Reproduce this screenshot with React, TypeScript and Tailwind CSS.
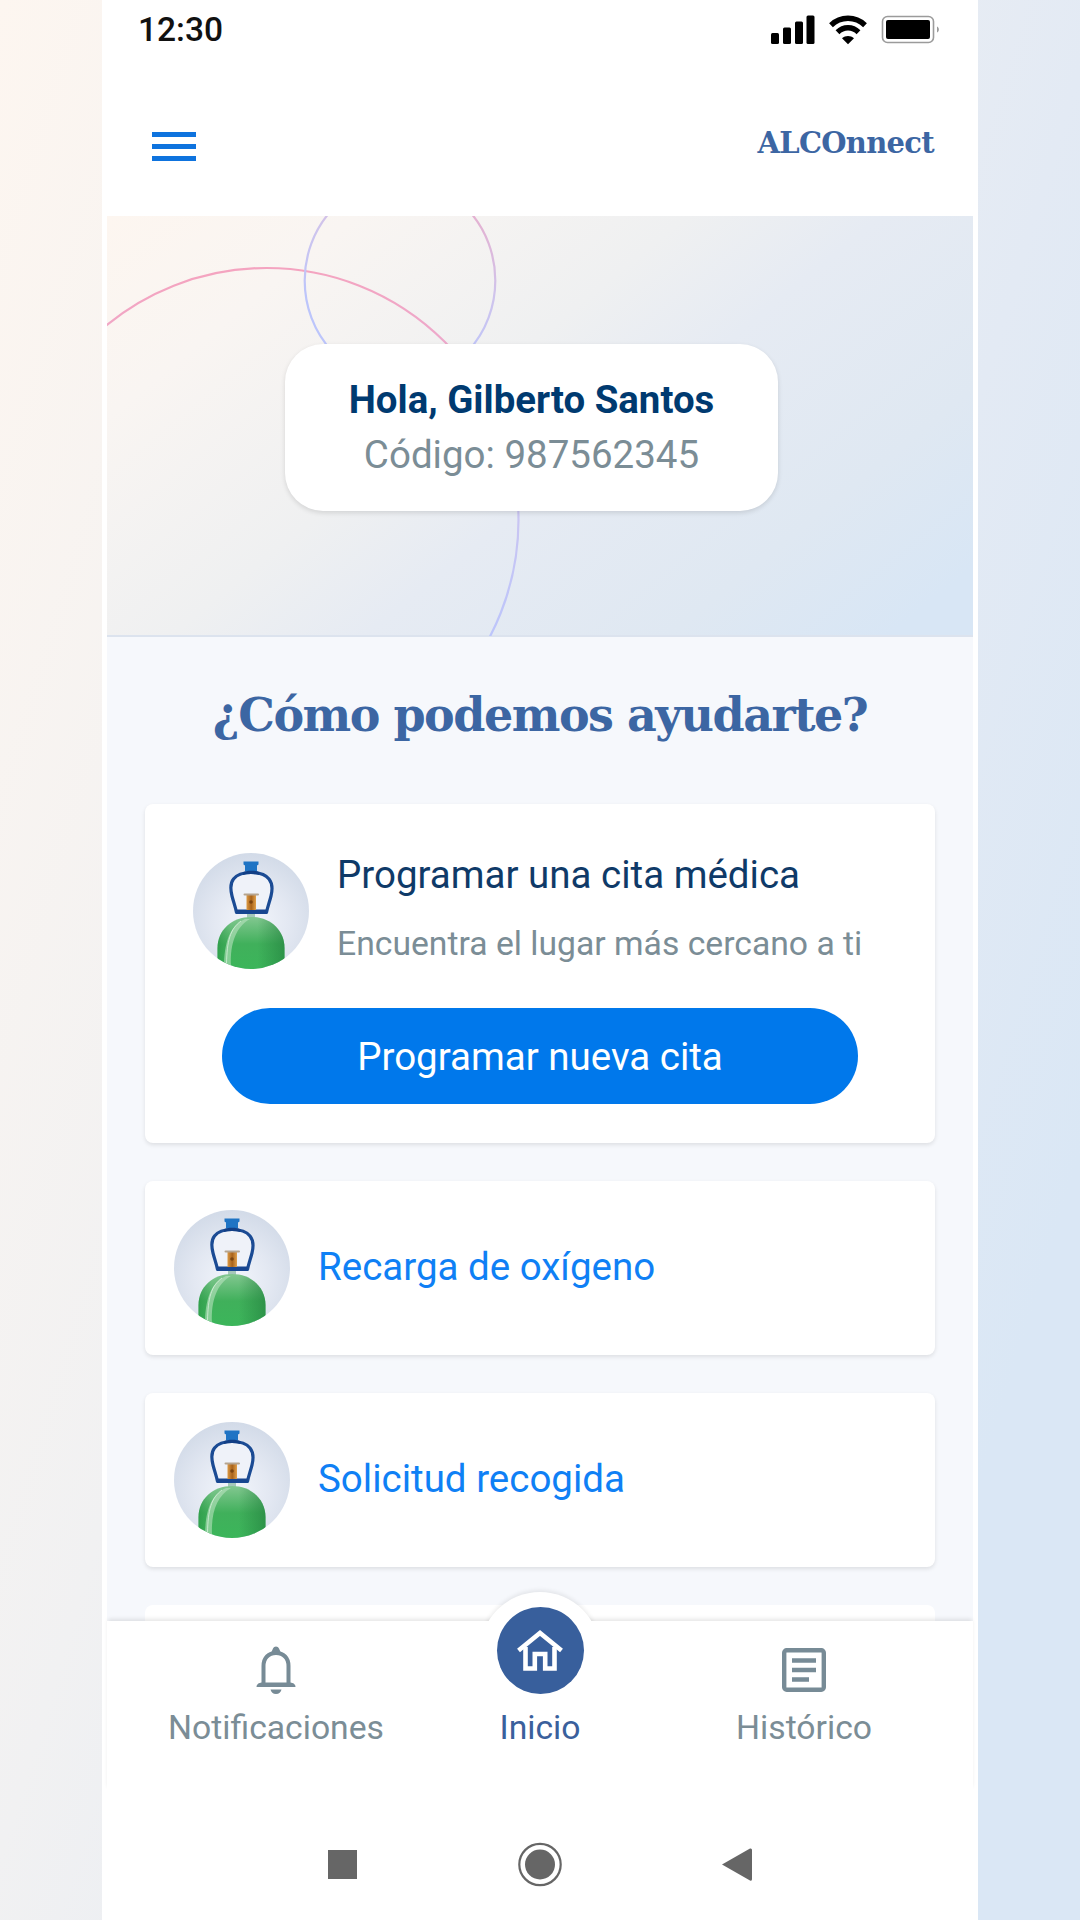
import { clsx } from 'clsx'

const services = [
  { id: 'refill', label: 'Recarga de oxígeno' },
  { id: 'pickup', label: 'Solicitud recogida' },
]

function StatusIcons() {
  return (
    <svg width="170" height="32" viewBox="0 0 170 32" fill="none">
      <g fill="#000">
        <rect x="1" y="19" width="8" height="11" rx="1.5" />
        <rect x="13" y="13.500" width="8" height="16.500" rx="1.5" />
        <rect x="25" y="7.500" width="8" height="22.500" rx="1.5" />
        <rect x="36.500" y="1.500" width="8" height="28.500" rx="1.5" />
      </g>
      <g stroke="#000" strokeWidth="5.400">
        <path d="M61 11.200C70.500 2 85.500 2 95 11.200" />
        <path d="M67.500 18.200C73.500 12.300 82.500 12.300 88.500 18.200" />
      </g>
      <path d="M72 24.300C75.500 21.200 80.500 21.200 84 24.300L78 30.300Z" fill="#000" />
      <rect x="112.500" y="2.500" width="51" height="26" rx="5" stroke="#9b9b9b" strokeWidth="1.600" />
      <rect x="116" y="6" width="44" height="19" rx="2" fill="#000" />
      <path d="M167 12.500C169.500 13.500 169.500 17.500 167 18.500Z" fill="#9b9b9b" />
    </svg>
  )
}

function HeroCircles() {
  return (
    <svg className="absolute inset-0" width="866" height="420" viewBox="107 216 866 420" fill="none">
      <defs>
        <linearGradient id="ring-big" gradientUnits="userSpaceOnUse" x1="300" y1="270" x2="330" y2="650">
          <stop offset="0" stopColor="#f4a4c0" />
          <stop offset="0.250" stopColor="#ecaacd" />
          <stop offset="0.650" stopColor="#cbc5f1" />
          <stop offset="1" stopColor="#bcc5fb" />
        </linearGradient>
        <linearGradient id="ring-small" gradientUnits="userSpaceOnUse" x1="440" y1="195" x2="385" y2="330">
          <stop offset="0" stopColor="#e6b0cf" />
          <stop offset="0.500" stopColor="#cfc4ec" />
          <stop offset="1" stopColor="#bcc5fb" />
        </linearGradient>
      </defs>
      <circle cx="266.500" cy="520" r="252" stroke="url(#ring-big)" strokeWidth="2.200" />
      <ellipse cx="400" cy="280.500" rx="95.300" ry="101" stroke="url(#ring-small)" strokeWidth="2.200" />
    </svg>
  )
}

function TankIcon({ id }: { id: string }) {
  return (
    <svg className="flex-shrink-0" width="116" height="116" viewBox="0 0 116 116">
      <defs>
        <radialGradient id={`${id}-bg`} cx="0.5" cy="0.600" r="0.650">
          <stop offset="0" stopColor="#f3f6fc" />
          <stop offset="0.500" stopColor="#e3e8f2" />
          <stop offset="1" stopColor="#cfd8e6" />
        </radialGradient>
        <linearGradient id={`${id}-dome`} x1="0" y1="0" x2="0" y2="1">
          <stop offset="0" stopColor="#82c790" />
          <stop offset="0.500" stopColor="#40b05b" />
          <stop offset="1" stopColor="#3bb65a" />
        </linearGradient>
        <linearGradient id={`${id}-shade`} x1="0" y1="0" x2="1" y2="0">
          <stop offset="0" stopColor="#1f8a3c" stopOpacity="0.450" />
          <stop offset="0.200" stopColor="#1f8a3c" stopOpacity="0" />
          <stop offset="0.600" stopColor="#1f7a3a" stopOpacity="0" />
          <stop offset="1" stopColor="#1f7a3a" stopOpacity="0.550" />
        </linearGradient>
        <linearGradient id={`${id}-brass`} x1="0" y1="0" x2="1" y2="0">
          <stop offset="0" stopColor="#dc9a45" />
          <stop offset="0.500" stopColor="#a8621a" />
          <stop offset="1" stopColor="#e0a04c" />
        </linearGradient>
        <clipPath id={`${id}-clip`}>
          <circle cx="58" cy="58" r="58" />
        </clipPath>
      </defs>
      <g clipPath={`url(#${id}-clip)`}>
        <rect width="116" height="116" fill={`url(#${id}-bg)`} />
        <path d="M58 19.500C50 19.500 44 21.500 40.500 26C36.500 31 37.500 37 39 43C40.500 49 42.500 54 43.500 59.500H73.500C74.500 54 76.500 49 78 43C79.500 37 80 31 76 26C72.500 21.500 66 19.500 58 19.500Z" fill="#eff2f9" stroke="#1b4b94" strokeWidth="3.200" strokeLinejoin="round" />
        <path d="M43.500 56.500H73.500V60.500H43.500Z" fill="#17458f" />
        <path d="M50.500 8.500H65.500V11.500L64 12.500V18.500H52V12.500L50.500 11.500Z" fill="#1f74c4" />
        <path d="M50 19.500C53 17 63.500 17 66.500 19.500L66 22C61 20.500 55 20.500 50 22Z" fill="#123f86" />
        <rect x="53.500" y="42" width="9.500" height="15" fill={`url(#${id}-brass)`} />
        <rect x="50.500" y="40.500" width="15.500" height="2" rx="1" fill="#b5a48f" />
        <circle cx="58" cy="49" r="1.800" fill="#7a4410" />
        <rect x="54" y="61" width="8" height="4" fill="#a5c7b9" />
        <path d="M24.500 118V95C24.500 77 39 64 58 64C77 64 91.500 77 91.500 95V118Z" fill={`url(#${id}-dome)`} />
        <path d="M24.500 118V95C24.500 77 39 64 58 64C77 64 91.500 77 91.500 95V118Z" fill={`url(#${id}-shade)`} />
        <path d="M52 66C39 72 32 84 31 111L38 113C37 90 43 74 57 66Z" fill="#b9e2c0" opacity="0.600" />
        <path d="M48 68C37 76 34 88 33.500 111" fill="none" stroke="#e3f5e6" strokeWidth="1" opacity="0.700" />
      </g>
    </svg>
  )
}

function BellIcon() {
  return (
    <svg width="40" height="48" viewBox="0 0 40 48" fill="none">
      <path d="M7.500 38V20C7.500 12 12.500 7 20 7S32.500 12 32.500 20V38" stroke="#778b96" strokeWidth="4" />
      <path d="M15 7L17 2.500C18 -0.200 22 -0.200 23 2.500L25 7Z" fill="#778b96" />
      <path d="M0.500 41C0.500 38 3 37 5.500 36.500H34.500C37 37 39.500 38 39.500 41Z" fill="#778b96" />
      <path d="M14.500 43.500H25.500C25 46 23 48 20 48S15 46 14.500 43.500Z" fill="#778b96" />
    </svg>
  )
}

function HistoryIcon() {
  return (
    <svg width="44" height="44" viewBox="0 0 44 44" fill="none" stroke="#778b96">
      <rect x="2.200" y="2.200" width="39.600" height="39.600" rx="2.500" strokeWidth="4.400" />
      <path d="M10 12.500H34M10 22H34M10 31.500H27" strokeWidth="4.600" />
    </svg>
  )
}

function HomeIcon() {
  return (
    <svg width="48" height="42" viewBox="0 0 48 42" fill="none" stroke="#fff" strokeWidth="4.600">
      <path d="M2.500 20.500L24 3L45.500 20.500" />
      <path d="M9.500 17V38.500H18.800V24H29.200V38.500H38.500V17" />
    </svg>
  )
}

export default function App() {
  const tab = 'flex w-[264px] flex-col items-center text-[#7b8d96]'

  return (
    <div className="h-[1920px] w-[1080px] overflow-hidden bg-[linear-gradient(107deg,#fdf6f0_0%,#f1f1f2_34%,#e3eaf4_66%,#dae7f5_86%,#dae7f5_100%)] px-[102px] font-['Roboto',sans-serif]">
      <div className="flex h-full flex-col bg-white px-[5px]">
        {/* Status bar */}
        <div className="flex h-[59px] items-center justify-between pr-[33px] pl-[31px]">
          <span className="text-[33.5px] leading-none font-medium text-[#111]">12:30</span>
          <StatusIcons />
        </div>

        {/* Header */}
        <header className="flex h-[157px] items-center justify-between pt-[18px] pr-[39px] pl-[45px]">
          <div className="flex w-[44px] flex-col gap-[7px]">
            <span className="h-[5px] bg-[#0e73de]" />
            <span className="h-[5px] bg-[#0e73de]" />
            <span className="h-[5px] bg-[#0e73de]" />
          </div>
          <span className="pb-[6px] font-['DejaVu_Serif',serif] text-[29px] leading-none font-bold tracking-[-0.7px] text-[#3c66a3]">
            ALCOnnect
          </span>
        </header>

        {/* Greeting */}
        <section className="relative h-[421px] shrink-0 border-b-2 border-[#dce3ee] bg-[linear-gradient(141deg,#fdf6f0_0%,#f9f5f2_18%,#eff0f1_42%,#e6ebf3_56%,#dfe8f2_78%,#d8e6f5_94%,#d8e6f5_100%)]">
          <HeroCircles />
          <div className="relative mt-[128px] ml-[178px] flex h-[167px] w-[493px] flex-col items-center justify-center rounded-[38px] bg-white pb-[2px] shadow-[0_2px_5px_rgba(0,0,0,0.12)]">
            <p className="text-[38.4px] leading-[55px] font-bold text-[#003a70]">Hola, Gilberto Santos</p>
            <p className="text-[38.5px] leading-[55px] text-[#7b8d96]">Código: 987562345</p>
          </div>
        </section>

        {/* Services */}
        <main className="flex h-[984px] shrink-0 flex-col overflow-hidden bg-[#f6f8fc] px-[38px]">
          <h1 className="flex h-[167px] shrink-0 items-center justify-center pb-[12px] font-['DejaVu_Serif',serif] text-[46px] leading-none font-bold tracking-[-1.5px] whitespace-nowrap text-[#3c66a3]">
            ¿Cómo podemos ayudarte?
          </h1>

          <div className="flex flex-col gap-[38px]">
            <div className="flex h-[339px] flex-col rounded-lg bg-white px-[48px] pt-[49px] shadow-[0_2px_4px_rgba(0,0,0,0.10)]">
              <div className="flex h-[155px] gap-[28px]">
                <TankIcon id="cita" />
                <div className="whitespace-nowrap">
                  <h2 className="text-[38.5px] leading-[44px] text-[#0f3a68]">Programar una cita médica</h2>
                  <p className="mt-[27px] text-[33.7px] leading-[40px] text-[#7b8d96]">Encuentra el lugar más cercano a ti</p>
                </div>
              </div>
              <button className="mx-auto h-[96px] w-[636px] rounded-full bg-[#0078eb] pt-[2px] text-[38.5px] leading-none text-white">
                Programar nueva cita
              </button>
            </div>

            {services.map(service => (
              <div
                key={service.id}
                className="flex h-[174px] items-center gap-[28px] rounded-lg bg-white pl-[29px] shadow-[0_2px_4px_rgba(0,0,0,0.10)]"
              >
                <TankIcon id={service.id} />
                <span className="pb-[2px] text-[38.5px] leading-none text-[#0f80f5]">{service.label}</span>
              </div>
            ))}

            <div className="h-[174px] rounded-lg bg-white" />
          </div>
        </main>

        {/* Bottom tabs */}
        <nav className="relative h-[170px] shrink-0 bg-white shadow-[0_-3px_4px_-1px_rgba(0,0,0,0.10)]">
          <div className="absolute top-[-29px] left-[373px] h-[120px] w-[120px] rounded-full bg-white shadow-[0_-2px_4px_rgba(0,0,0,0.08)]" />
          <div className="relative flex h-full bg-white px-[37px]">
            <div className={clsx(tab, 'pt-[25px]')}>
              <BellIcon />
              <span className="mt-[14px] text-[33.7px] leading-[40px]">Notificaciones</span>
            </div>
            <div className="flex w-[264px] flex-col items-center text-[#3a609c]">
              <div className="relative mt-[-14px] flex h-[87px] w-[87px] items-center justify-center rounded-full bg-[#385f9c]">
                <HomeIcon />
              </div>
              <span className="mt-[14px] text-[33.7px] leading-[40px]">Inicio</span>
            </div>
            <div className={clsx(tab, 'pt-[27px]')}>
              <HistoryIcon />
              <span className="mt-[16px] text-[33.7px] leading-[40px]">Histórico</span>
            </div>
          </div>
        </nav>

        {/* System buttons */}
        <div className="flex flex-1 items-start justify-center pt-[51px]">
          <svg width="430" height="46" viewBox="0 0 430 46" fill="#666">
            <rect x="3" y="8" width="29" height="29" />
            <circle cx="215" cy="22.500" r="20.700" fill="none" stroke="#666" strokeWidth="2.200" />
            <circle cx="215" cy="22.500" r="15" />
            <path d="M397 22.500L425 6.500Q427 6 427 8V37Q427 39.500 425 38.500Z" />
          </svg>
        </div>
      </div>
    </div>
  )
}
